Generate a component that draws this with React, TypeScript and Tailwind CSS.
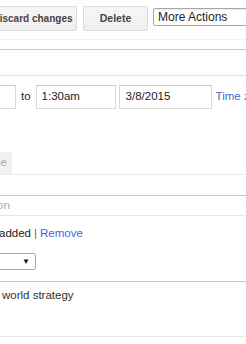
export default function App() {
  return (
    <div className="relative h-[344px] w-[246px] overflow-hidden bg-white font-['Liberation_Sans',Arial,sans-serif] text-[11.5px] text-[#222]">
      {/* toolbar */}
      <div className="flex items-start pt-[6px]">
        <button className="ml-[-12px] flex h-[25px] w-[89px] shrink-0 items-center justify-center whitespace-nowrap rounded-[2px] border border-[#dcdcdc] bg-gradient-to-b from-[#f6f6f6] to-[#efefef] text-[10px] font-bold text-[#444]">
          Discard changes
        </button>
        <button className="ml-[6px] flex h-[25px] w-[65px] shrink-0 items-center justify-center rounded-[2px] border border-[#dcdcdc] bg-gradient-to-b from-[#f6f6f6] to-[#efefef] text-[10.5px] font-bold text-[#444]">
          Delete
        </button>
        <div className="ml-[5px] mt-[2px] flex h-[18px] w-[120px] shrink-0 items-center rounded-[2px] border border-[#a8a8a8] pl-[4px] text-[12px] text-[#222] shadow-[inset_0_1px_1px_rgba(0,0,0,0.08)]">
          More Actions
        </div>
      </div>

      <div className="mt-[8px] h-px w-full bg-[#f1f1f1]" />

      {/* title input */}
      <div className="ml-[-20px] mt-[9px] h-[27px] w-[300px] border-b border-t border-b-[#e0e0e0] border-t-[#c8c8c8]" />

      {/* date row */}
      <div className="mt-[9px] flex items-center">
        <div className="ml-[-60px] h-[24px] w-[76px] shrink-0 border border-[#d9d9d9] border-t-[#c8c8c8]" />
        <span className="ml-[5px] shrink-0">to</span>
        <div className="ml-[5px] flex h-[24px] w-[80px] shrink-0 items-center border border-[#d9d9d9] border-t-[#c8c8c8] pl-[5px]">
          1:30am
        </div>
        <div className="ml-[3px] flex h-[24px] w-[93px] shrink-0 items-center border border-[#d9d9d9] border-t-[#c8c8c8] pl-[6px]">
          3/8/2015
        </div>
        <span className="ml-[4px] shrink-0 whitespace-nowrap text-[#3a6ad4]">Time zone</span>
      </div>

      {/* tabs */}
      <div className="mt-[43px] flex">
        <div className="ml-[-80px] flex h-[22px] w-[92px] shrink-0 items-center justify-end whitespace-nowrap rounded-t-[2px] bg-[#f1f1f1] pr-[5px] text-[#aaa]">
          Find a time
        </div>
      </div>
      <div className="h-px w-full bg-[#ebebeb]" />

      {/* location */}
      <div className="ml-[-80px] mt-[20px] flex h-[21px] w-[360px] items-center whitespace-nowrap border-b border-t border-b-[#e6e6e6] border-t-[#c6c6c6] pl-[10px] text-[#aaa]">
        Enter a location
      </div>

      {/* video call */}
      <div className="mt-[11px] flex h-[14px] items-center whitespace-nowrap">
        <span className="ml-[-1px]">added</span>
        <span className="ml-[3px] text-[#666]">|</span>
        <span className="ml-[3px] text-[#3a6ad4]">Remove</span>
      </div>

      {/* select */}
      <div className="ml-[-80px] mt-[12px] flex h-[17px] w-[116px] items-center justify-end rounded-[2px] border border-[#aaa] pr-[5px] text-[8px] text-[#111]">
        ▼
      </div>

      {/* description */}
      <div className="ml-[-20px] mt-[11px] h-[56px] w-[300px] border-b border-t border-b-[#e6e6e6] border-t-[#c6c6c6] pl-[22px] pt-[5px] text-[#333]">
        world strategy
      </div>
    </div>
  );
}
